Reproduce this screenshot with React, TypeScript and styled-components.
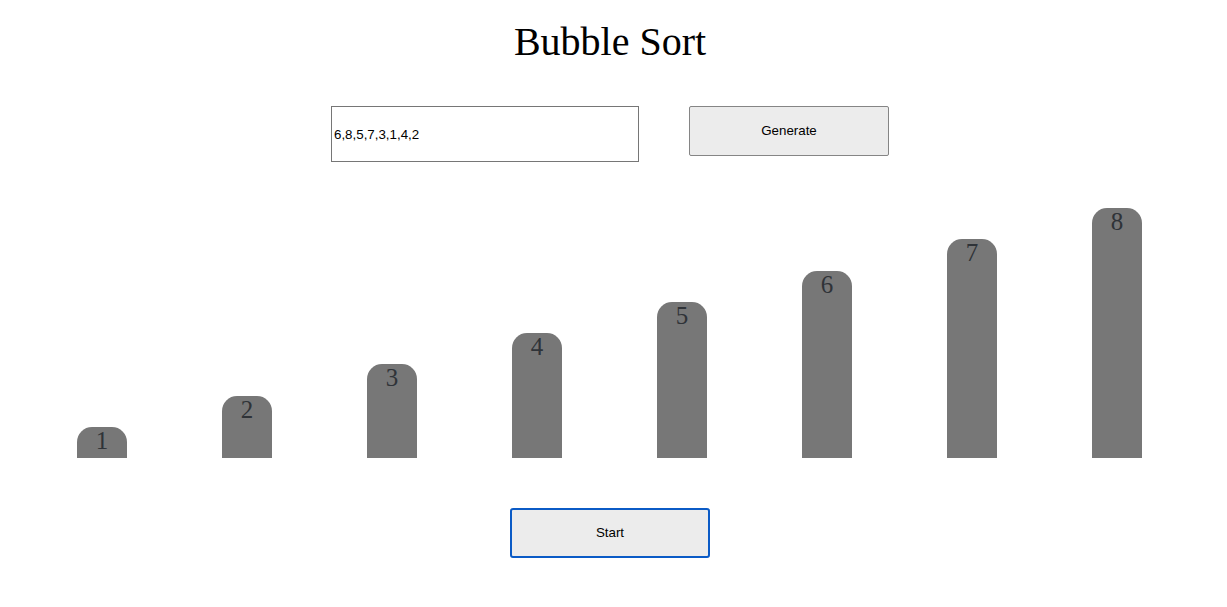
import styled, { createGlobalStyle } from 'styled-components'

const values = [1, 2, 3, 4, 5, 6, 7, 8]
const UNIT = 31.25

const GlobalStyle = createGlobalStyle`
  body {
    margin: 0;
    background: #fff;
    font-family: "Liberation Serif", "Times New Roman", serif;
  }
`

function App() {
  return (
    <>
      <GlobalStyle />
      <Page>
        <Title>Bubble Sort</Title>
        <Controls>
          <NumbersInput defaultValue="6,8,5,7,3,1,4,2" />
          <Button>Generate</Button>
        </Controls>
        <Bars>
          {values.map((v) => (
            <Bar key={v} $height={v * UNIT}>
              <BarLabel>{v}</BarLabel>
            </Bar>
          ))}
        </Bars>
        <Footer>
          <StartButton>Start</StartButton>
        </Footer>
      </Page>
    </>
  )
}

export default App

const Page = styled.div`
  width: 1220px;
  display: flex;
  flex-direction: column;
  align-items: center;
`
const Title = styled.h1`
  margin: 20px 0 0;
  font-family: "Liberation Serif", "Times New Roman", serif;
  font-size: 40px;
  font-weight: 400;
  line-height: 44px;
  color: #000;
`
const Controls = styled.div`
  margin-top: 42px;
  display: flex;
  align-items: flex-start;
  gap: 50px;
`
const NumbersInput = styled.input`
  box-sizing: border-box;
  width: 308px;
  height: 56px;
  padding: 0 2px;
  border: 1px solid #767676;
  border-radius: 0;
  font-family: "Liberation Sans", Arial, sans-serif;
  font-size: 13.33px;
  color: #000;
  outline: none;
`
const Button = styled.button`
  box-sizing: border-box;
  width: 200px;
  height: 50px;
  background: #ececec;
  border: 1px solid #858585;
  border-radius: 2px;
  font-family: "Liberation Sans", Arial, sans-serif;
  font-size: 13.33px;
  line-height: 16px;
  color: #000;
  padding: 0;
`
const Bars = styled.div`
  margin-top: 46px;
  padding-right: 1px;
  height: 250px;
  display: flex;
  align-items: flex-end;
  gap: 95px;
`
const Bar = styled.div<{ $height: number }>`
  width: 50px;
  height: ${(p) => p.$height}px;
  background: #777777;
  border-radius: 15px 15px 0 0;
  display: flex;
  justify-content: center;
`
const BarLabel = styled.span`
  font-family: "Liberation Serif", "Times New Roman", serif;
  font-size: 25px;
  line-height: 28px;
  color: #2f3338;
`
const Footer = styled.div`
  margin-top: 50px;
`
const StartButton = styled(Button)`
  border: 2px solid #0b5bc6;
  border-radius: 3px;
`
